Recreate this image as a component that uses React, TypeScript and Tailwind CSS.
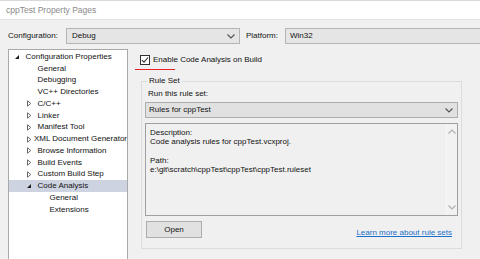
import React from "react";

const Chevron = ({ className = "" }: { className?: string }) => (
  <svg width="8" height="5" viewBox="0 0 8 5" className={className}>
    <path d="M0.5 0.5 L4 4 L7.5 0.5" fill="none" stroke="currentColor" strokeWidth="1.2" />
  </svg>
);

const Expanded = () => (
  <svg width="6" height="6" viewBox="0 0 6 6">
    <path d="M5 1 L5 5 L1 5 Z" fill="#1e1e1e" />
  </svg>
);

const Collapsed = () => (
  <svg width="6" height="7" viewBox="0 0 6 7">
    <path d="M1.5 0.8 L4.8 3.5 L1.5 6.2 Z" fill="none" stroke="#6b6b6b" strokeWidth="1" />
  </svg>
);

type Item = { label: string; level: number; kind?: "exp" | "col"; selected?: boolean };

const items: Item[] = [
  { label: "Configuration Properties", level: 0, kind: "exp" },
  { label: "General", level: 1 },
  { label: "Debugging", level: 1 },
  { label: "VC++ Directories", level: 1 },
  { label: "C/C++", level: 1, kind: "col" },
  { label: "Linker", level: 1, kind: "col" },
  { label: "Manifest Tool", level: 1, kind: "col" },
  { label: "XML Document Generator", level: 1, kind: "col" },
  { label: "Browse Information", level: 1, kind: "col" },
  { label: "Build Events", level: 1, kind: "col" },
  { label: "Custom Build Step", level: 1, kind: "col" },
  { label: "Code Analysis", level: 1, kind: "exp", selected: true },
  { label: "General", level: 2 },
  { label: "Extensions", level: 2 },
];

const pad = ["pl-[5px]", "pl-[17px]", "pl-[29px]"];

export default function App() {
  return (
    <div
      className="w-[480px] h-[259px] overflow-hidden bg-[#f0f0f0] text-[#111] text-[8px] leading-none"
      style={{ fontFamily: '"Liberation Sans", Arial, sans-serif' }}
    >
      {/* title bar */}
      <div className="h-[20px] bg-white border-t border-[#d9d9d9] border-b border-b-[#e3e3e3] flex items-center pl-[6px] text-[#8a8a8a] text-[8.5px]">
        cppTest Property Pages
      </div>

      {/* configuration row */}
      <div className="flex items-center h-[16px] mt-[8px] pl-[8px]">
        <span className="w-[58px]">Configuration:</span>
        <div className="w-[174px] h-[16px] bg-[#e5e5e5] border border-[#b5b5b5] flex items-center justify-between pl-[5px] pr-[4px]">
          <span>Debug</span>
          <Chevron className="text-[#555]" />
        </div>
        <span className="ml-[6px] w-[39px]">Platform:</span>
        <div className="flex-1 h-[16px] bg-[#e5e5e5] border border-r-0 border-[#b5b5b5] flex items-center pl-[4px]">
          <span>Win32</span>
        </div>
      </div>

      {/* main */}
      <div className="flex mt-[5px]">
        {/* tree */}
        <div className="ml-[8px] w-[120px] h-[220px] bg-white border border-b-0 border-[#a9a9a9] pt-[1px]">
          {items.map((it, i) => (
            <div
              key={i}
              className={`h-[11.75px] flex items-center whitespace-nowrap ${pad[it.level]} ${
                it.selected ? "bg-[#cdd3e1]" : ""
              }`}
            >
              <span className="w-[11.5px] flex items-center">
                {it.kind === "exp" ? <Expanded /> : it.kind === "col" ? <Collapsed /> : null}
              </span>
              <span>{it.label}</span>
            </div>
          ))}
        </div>

        {/* right */}
        <div className="flex-1 pl-[12px] pt-[6px]">
          <div className="flex items-center h-[10px]">
            <div className="w-[10px] h-[10px] border border-[#333] bg-white flex items-center justify-center">
              <svg width="8" height="8" viewBox="0 0 8 8">
                <path d="M1 4.2 L3 6.2 L7 1.5" fill="none" stroke="#333" strokeWidth="1.1" />
              </svg>
            </div>
            <span className="ml-[3px]">Enable Code Analysis on Build</span>
          </div>
          <div className="ml-[-5px] mt-[4px] w-[40px] h-[1px] bg-[#e8242a]" />

          <fieldset className="mt-[6px] ml-[1px] w-[321px] h-[173px] border border-[#dcdcdc] px-[3px] pb-0 pt-0">
            <legend className="ml-[2px] px-[2px] leading-[10px]">Rule Set</legend>
            <div className="pl-[3px] mt-[4px]">Run this rule set:</div>
            <div className="mt-[4px] h-[16px] bg-[#e1e1e1] border border-[#adadad] flex items-center justify-between pl-[3px] pr-[4px]">
              <span>Rules for cppTest</span>
              <Chevron className="text-[#555]" />
            </div>
            <div className="mt-[5px] h-[93px] border border-[#a0a0a0] flex">
              <div className="flex-1 pl-[4px] pt-[4px] leading-[9.3px]">
                <div>Description:</div>
                <div>Code analysis rules for cppTest.vcxproj.</div>
                <div className="h-[9.3px]" />
                <div>Path:</div>
                <div>e:\git\scratch\cppTest\cppTest\cppTest.ruleset</div>
              </div>
              <div className="w-[11px] border-l border-[#f8f8f8] bg-[#f2f2f2] flex flex-col items-center justify-between py-[5px] text-[#b0b0b0]">
                <Chevron className="rotate-180" />
                <Chevron />
              </div>
            </div>
            <div className="flex items-end justify-between mt-[5px] pr-[6px]">
              <div className="ml-[1px] w-[56px] h-[17px] bg-[#e1e1e1] border border-[#adadad] flex items-center justify-center">
                Open
              </div>
              <span className="text-[#1a6fc9] underline mb-[1px]">Learn more about rule sets</span>
            </div>
          </fieldset>
        </div>
      </div>
    </div>
  );
}
